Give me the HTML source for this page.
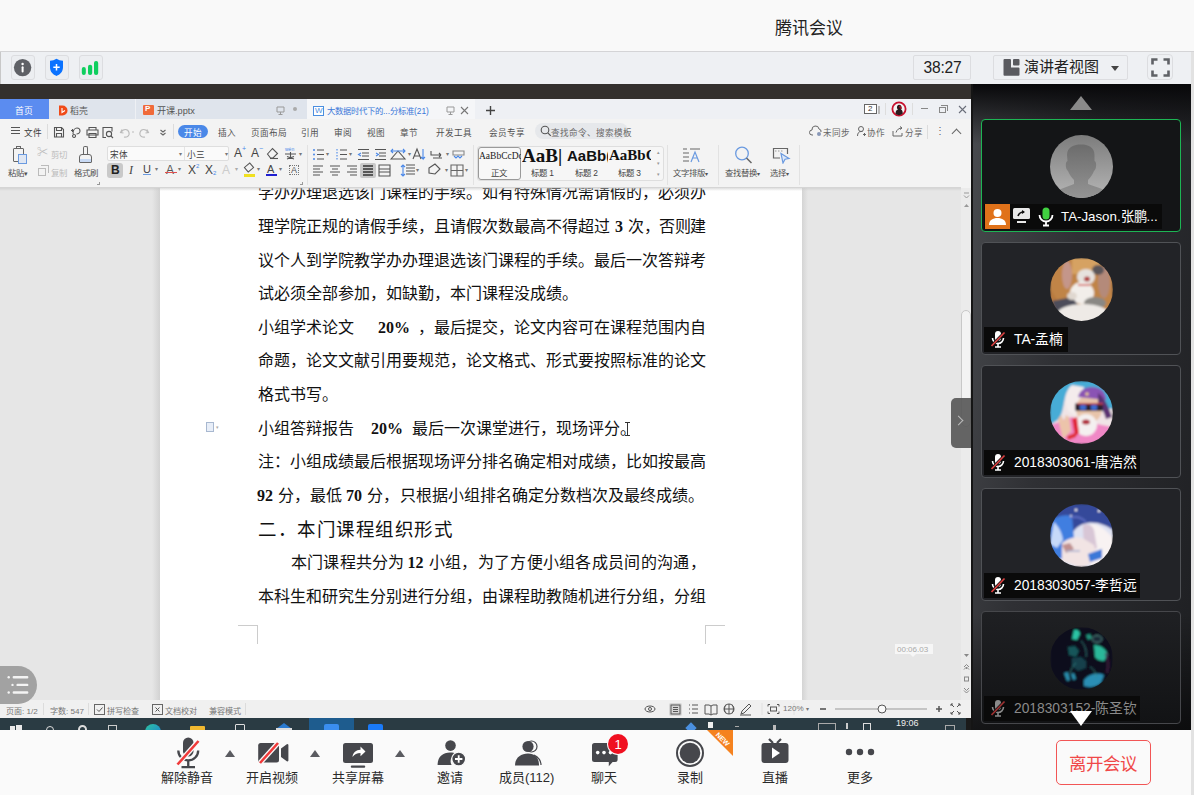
<!DOCTYPE html>
<html lang="zh-CN"><head><meta charset="utf-8">
<style>
*{margin:0;padding:0;box-sizing:border-box}
html,body{width:1194px;height:795px;overflow:hidden;background:#f9f9f9;font-family:"Liberation Sans",sans-serif;position:relative}
.a{position:absolute}
.t{white-space:nowrap}
.d{position:absolute;white-space:nowrap;font-family:"Liberation Serif",serif;font-size:16px;line-height:20px;color:#111}
</style></head><body>
<!-- header -->
<div class="a" style="left:0;top:0;width:1194px;height:51px;background:#f9f9f9"></div>
<div class="a t" style="left:775px;top:13.5px;font-size:17px;color:#222">腾讯会议</div>
<div class="a" style="left:0;top:51px;width:1194px;height:1px;background:#d4d4d6"></div>
<!-- toolbar -->
<div class="a" style="left:0;top:52px;width:1194px;height:32px;background:#eef0f3"></div>
<div class="a" style="left:0;top:52px;width:1px;height:32px;background:#c8c8c8"></div>
<!-- toolbar icons -->
<div class="a" style="left:11px;top:55px;width:24px;height:25px;border:1px solid #dcdde0;border-radius:3px;background:#eceef1"></div>
<svg class="a" style="left:13px;top:58px" width="20" height="20" viewBox="0 0 20 20"><circle cx="9.6" cy="9.6" r="8.7" fill="#5f6166"/><circle cx="9.6" cy="6" r="1.2" fill="#fff"/><rect x="8.6" y="8.2" width="2" height="6.4" rx="1" fill="#fff"/></svg>
<div class="a" style="left:45px;top:55px;width:24px;height:25px;border:1px solid #dcdde0;border-radius:3px;background:#eceef1"></div>
<svg class="a" style="left:47px;top:58px" width="20" height="19" viewBox="0 0 20 19"><path d="M9.5 .8c2 1.3 4 2 6.5 2v6.5c0 4.5-3 7.5-6.5 8.6c-3.5-1.1-6.5-4.1-6.5-8.6v-6.5c2.5 0 4.5-.7 6.5-2z" fill="#0a72ff"/><path d="M9.5 6v6.5M6.3 9.3h6.4" stroke="#fff" stroke-width="1.5"/></svg>
<div class="a" style="left:79px;top:55px;width:24px;height:25px;border:1px solid #dcdde0;border-radius:3px;background:#eceef1"></div>
<svg class="a" style="left:81px;top:60px" width="20" height="17" viewBox="0 0 20 17"><rect x=".8" y="7" width="4" height="8" rx="2" fill="#0fcf5e"/><rect x="7" y="4.8" width="4.2" height="10.2" rx="2" fill="#0fcf5e"/><rect x="13" y="1.1" width="4.2" height="13.9" rx="2" fill="#0fcf5e"/></svg>
<div class="a" style="left:913px;top:55px;width:58px;height:25px;border:1px solid #dcdde0;border-radius:2px;background:#eef0f3"></div>
<div class="a t" style="left:923.5px;top:59px;font-size:15.6px;line-height:18px;color:#222;letter-spacing:-0.2px">38:27</div>
<div class="a" style="left:993px;top:55px;width:135px;height:25px;border:1px solid #dcdde0;border-radius:2px;background:#eef0f3"></div>
<svg class="a" style="left:1002px;top:58px" width="19" height="19" viewBox="0 0 19 19"><path d="M2.5 1h5.5a1 1 0 0 1 1 1v7.5h7.5a1 1 0 0 1 1 1v6.3a1 1 0 0 1-1 1h-14a1 1 0 0 1-1-1v-14.8a1 1 0 0 1 1-1z" fill="#5a5b60"/><rect x="11" y="1" width="6.5" height="6.5" rx="1" fill="#5a5b60"/></svg>
<div class="a t" style="left:1024px;top:58px;font-size:15px;line-height:18px;color:#222">演讲者视图</div>
<div class="a" style="left:1111px;top:66px;width:0;height:0;border-left:4px solid transparent;border-right:4px solid transparent;border-top:5px solid #444"></div>
<div class="a" style="left:1147px;top:54px;width:26px;height:26px;border:1px solid #dcdde0;border-radius:4px;background:#eef0f3"></div>
<svg class="a" style="left:1151px;top:58px" width="19" height="19" viewBox="0 0 19 19"><path d="M1.5 6.5v-5h5M12.5 1.5h5v5M17.5 12.5v5h-5M6.5 17.5h-5v-5" stroke="#5f6166" stroke-width="2.6" fill="none"/></svg>
<!-- dark bar -->
<div class="a" style="left:0;top:84px;width:971px;height:15px;background:#33302d"></div>
<!-- WPS window -->
<div id="wps" class="a" style="left:0;top:99px;width:971px;height:619px;background:#e6e6e6;overflow:hidden">
 <!-- tabs row -->
 <div class="a" style="left:0;top:0;width:971px;height:20px;background:#eef0f4"></div>
 <div class="a" style="left:0;top:0;width:49px;height:20px;background:#5b8cf0"></div>
 <div class="a t" style="left:15px;top:5.5px;font-size:8.8px;line-height:12px;color:#fff">首页</div>
 <div class="a" style="left:49px;top:0;width:86px;height:20px;background:#dfe4ec"></div>
 <svg class="a" style="left:58px;top:6px" width="10" height="11" viewBox="0 0 10 11"><path d="M1 0.5h3.5a5 5 0 0 1 0 10H1z" fill="#f04a18"/><path d="M4 3v4.5l3-2" stroke="#fff" stroke-width="1.1" fill="none"/></svg>
 <div class="a t" style="left:70px;top:5.5px;font-size:8.8px;line-height:12px;color:#555">稻壳</div>
 <div class="a" style="left:136px;top:0;width:171px;height:20px;background:#dfe4ec"></div>
 <div class="a" style="left:143px;top:6px;width:11px;height:10px;background:#f06a3a;border-radius:1px"></div>
 <div class="a t" style="left:145px;top:5px;font-size:8px;line-height:9px;color:#fff;font-weight:bold">P</div>
 <div class="a t" style="left:157px;top:5.5px;font-size:9.2px;line-height:12px;color:#555">开课.pptx</div>
 <svg class="a" style="left:276px;top:7px" width="9" height="9" viewBox="0 0 9 9"><path d="M1 1h7v5h-7zM4.5 6v2M2.5 8.5h4" stroke="#999" stroke-width="1" fill="none"/></svg>
 <div class="a" style="left:293px;top:8px;width:4px;height:4px;border-radius:50%;background:#aaa"></div>
 <div class="a" style="left:307px;top:0;width:168px;height:20px;background:#f5f6f8"></div>
 <div class="a" style="left:313px;top:7px;width:11px;height:10px;border:1px solid #4a8ee0;background:#fff"></div>
 <div class="a t" style="left:315px;top:7px;font-size:8px;line-height:9px;color:#4a8ee0">W</div>
 <div class="a t" style="left:327px;top:5.5px;font-size:8.4px;line-height:12px;color:#3b78d8">大数据时代下的...分标准(21)</div>
 <svg class="a" style="left:446px;top:7px" width="9" height="9" viewBox="0 0 9 9"><path d="M1 1h7v5h-7zM4.5 6v2M2.5 8.5h4" stroke="#999" stroke-width="1" fill="none"/></svg>
 <svg class="a" style="left:460px;top:7px" width="9" height="9" viewBox="0 0 9 9"><path d="M1 1l7 7M8 1l-7 7" stroke="#777" stroke-width="1.1"/></svg>
 <svg class="a" style="left:485px;top:6px" width="11" height="11" viewBox="0 0 11 11"><path d="M5.5 1v9M1 5.5h9" stroke="#444" stroke-width="1.4"/></svg>
 <div class="a" style="left:864px;top:5px;width:13px;height:10px;border:1px solid #666;background:#fff"></div>
 <div class="a t" style="left:868px;top:5px;font-size:8px;line-height:10px;color:#333">2</div>
 <div class="a" style="left:878px;top:7px;width:2px;height:8px;background:#bbb"></div>
 <svg class="a" style="left:891px;top:2px" width="16" height="16" viewBox="0 0 16 16"><circle cx="8" cy="8" r="6.6" fill="#f4f4f4" stroke="#c8102e" stroke-width="1.8"/><path d="M4.5 13c0-3 1-4 2.5-4.5c-1.5-1-1.5-4.5 1-4.8c2.5-.2 3.2 2.8 1.8 4.6c1.2.6 2 2 2 4.2a6 6 0 0 1-7.3.5z" fill="#2a1a1e"/><path d="M8 5.5c1.5 0 2.2 1.2 2 2.5" stroke="#a01020" stroke-width="1.4" fill="none"/></svg>
 <div class="a" style="left:885px;top:4px;width:1px;height:12px;background:#ddd"></div>
 <div class="a" style="left:912px;top:4px;width:1px;height:12px;background:#ddd"></div>
 <div class="a" style="left:921px;top:9px;width:7px;height:1px;background:#888"></div>
 <div class="a" style="left:939px;top:8px;width:7px;height:6px;border:1px solid #888"></div>
 <div class="a" style="left:941px;top:6px;width:7px;height:6px;border-top:1px solid #888;border-right:1px solid #888"></div>
 <svg class="a" style="left:958px;top:6px" width="9" height="9" viewBox="0 0 9 9"><path d="M1 1l7 7M8 1l-7 7" stroke="#6a6e7a" stroke-width="1.1"/></svg>
 <!-- menu row -->
 <div class="a" style="left:0;top:20px;width:971px;height:69px;background:#f3f3f3"></div>
 <div class="a" style="left:11px;top:28px;width:9px;height:7px;border-top:1px solid #555;border-bottom:1px solid #555"></div>
 <div class="a" style="left:11px;top:31px;width:9px;height:1px;background:#555"></div>
 <div class="a t" style="left:24px;top:28.5px;font-size:8.6px;line-height:10px;color:#404040">文件</div>
 <div class="a" style="left:47px;top:25px;width:1px;height:15px;background:#dcdcdc"></div>
 <svg class="a" style="left:52px;top:26px" width="120" height="14" viewBox="0 0 120 14"><g stroke="#555" stroke-width="1.1" fill="none">
  <path d="M2.5 2.5h7l2 2v7.5h-9z"/><path d="M4.5 2.5v3h5v-3M4.5 12v-3.5h5V12"/>
  <path d="M19 5.5h3M20.5 4v3M21 9c0-4 2-6 4-6s3 1.5 3 3-1.5 3-3.5 3M22 9.5a1.5 1.5 0 1 0 .1 0"/>
  <path d="M37 4.5v-2h7v2M35 5h11v5h-11zM37 8.5h7v4h-7z"/>
  <path d="M54 12.5h-3v-10h9v4"/><circle cx="57" cy="9" r="2.6"/><path d="M59 11l2 2"/>
  <path d="M70 4.5l-1.5 3 3 .5M69 7.5c2-4 7-4 8 0s-3 5-5 4.5" stroke="#bbb"/><path d="M80 7h2" stroke="#bbb"/>
  <path d="M95 4.5l1.5 3-3 .5M96 7.5c-2-4-7-4-8 0s3 5 5 4.5" stroke="#bbb"/>
  <path d="M108.5 5l2.5 2 2.5-2M108.5 8l2.5 2 2.5-2" stroke="#666"/>
 </g></svg>
 <div class="a" style="left:173px;top:25px;width:1px;height:15px;background:#dcdcdc"></div>
 <div class="a" style="left:178px;top:26px;width:30px;height:13px;border-radius:7px;background:#4a88e8"></div>
 <div class="a t" style="left:184px;top:28.5px;font-size:8.6px;line-height:10px;color:#fff">开始</div>
 <div class="a t" style="left:218px;top:28.5px;font-size:8.6px;line-height:10px;color:#505050">插入</div>
 <div class="a t" style="left:251px;top:28.5px;font-size:8.6px;line-height:10px;color:#505050">页面布局</div>
 <div class="a t" style="left:301px;top:28.5px;font-size:8.6px;line-height:10px;color:#505050">引用</div>
 <div class="a t" style="left:334px;top:28.5px;font-size:8.6px;line-height:10px;color:#505050">审阅</div>
 <div class="a t" style="left:367px;top:28.5px;font-size:8.6px;line-height:10px;color:#505050">视图</div>
 <div class="a t" style="left:400px;top:28.5px;font-size:8.6px;line-height:10px;color:#505050">章节</div>
 <div class="a t" style="left:436px;top:28.5px;font-size:8.6px;line-height:10px;color:#505050">开发工具</div>
 <div class="a t" style="left:489px;top:28.5px;font-size:8.6px;line-height:10px;color:#505050">会员专享</div>
 <div class="a" style="left:535px;top:24px;width:93px;height:16px;border-radius:8px;background:#e6e8eb"></div>
 <svg class="a" style="left:540px;top:26px" width="12" height="12" viewBox="0 0 12 12"><circle cx="5" cy="5" r="3.8" stroke="#555" stroke-width="1.1" fill="none"/><path d="M7.8 7.8l3 3" stroke="#555" stroke-width="1.2"/></svg>
 <div class="a t" style="left:551px;top:28.5px;font-size:8.6px;line-height:10px;color:#666">查找命令、搜索模板</div>
 <svg class="a" style="left:809px;top:26px" width="100" height="12" viewBox="0 0 100 12"><g stroke="#666" stroke-width="1" fill="none"><path d="M4 10H3a2.5 2.5 0 0 1 0-5a3.5 3.5 0 0 1 7-1a2.5 2.5 0 0 1 2 3"/><circle cx="10" cy="9" r="2" fill="#8898b8" stroke="none"/>
 <circle cx="52" cy="4" r="2.5"/><path d="M48.5 11c0-3 1.5-4.5 3.5-4.5h1.5M54 9.5h3M55.5 8v3"/>
 <path d="M84 6v5h9V8M87 7.5c1-3 3-4.5 6-4.5M91 1.5l2 1.5-2 1.5"/></g></svg>
 <div class="a t" style="left:823px;top:28.5px;font-size:8.6px;line-height:10px;color:#666">未同步</div>
 <div class="a t" style="left:867px;top:28.5px;font-size:8.6px;line-height:10px;color:#666">协作</div>
 <div class="a t" style="left:905px;top:28.5px;font-size:8.6px;line-height:10px;color:#666">分享</div>
 <div class="a" style="left:927px;top:26px;width:1px;height:14px;background:#dcdcdc"></div>
 <div class="a t" style="left:934.5px;top:26px;font-size:10px;line-height:12px;color:#666">⋮</div>
 <div class="a" style="left:953px;top:31px;width:7px;height:7px;border-top:1px solid #666;border-left:1px solid #666;transform:rotate(45deg)"></div>

 <!-- ribbon (y offsets relative to wps top 99) -->
 <!-- paste -->
 <div class="a" style="left:13px;top:49px;width:11px;height:14px;border:1px solid #666;border-radius:1px;background:#f3f3f3"></div>
 <div class="a" style="left:16px;top:47px;width:5px;height:3px;border:1px solid #666;background:#f3f3f3"></div>
 <div class="a" style="left:18px;top:55px;width:9px;height:10px;border:1px solid #6a9ae0;background:#dfe6f2"></div>
 <div class="a t" style="left:8px;top:69px;font-size:8.4px;line-height:10px;color:#505050">粘贴<span style="font-size:7px">▾</span></div>
 <div class="a t" style="left:37px;top:47px;font-size:11px;line-height:12px;color:#bbb">✂</div>
 <div class="a t" style="left:51px;top:50.5px;font-size:8.4px;line-height:10px;color:#bbb">剪切</div>
 <div class="a" style="left:38px;top:69px;width:8px;height:8px;border:1px solid #bbb"></div>
 <div class="a" style="left:41px;top:66px;width:8px;height:8px;border:1px solid #bbb;border-left:0;border-bottom:0"></div>
 <div class="a t" style="left:51px;top:69px;font-size:8.4px;line-height:10px;color:#bbb">复制</div>
 <div class="a" style="left:83px;top:47px;width:5px;height:8px;border:1px solid #666;border-bottom:0;border-radius:2px 2px 0 0"></div>
 <div class="a" style="left:79px;top:55px;width:13px;height:9px;border:1px solid #666;border-radius:3px 3px 1px 1px;background:linear-gradient(#f3f3f3 50%,#c8daf5 50%)"></div>
 <div class="a t" style="left:74px;top:69px;font-size:8.4px;line-height:10px;color:#505050">格式刷</div>
 <div class="a" style="left:97px;top:83px;width:3px;height:3px;border-right:1px solid #999;border-bottom:1px solid #999"></div>
 
 <!-- font -->
 <div class="a" style="left:107px;top:47px;width:122px;height:15px;border:1px solid #dedede;border-radius:2px;background:#fafafa"></div>
 <div class="a" style="left:184px;top:48px;width:1px;height:13px;background:#e4e4e4"></div>
 <div class="a t" style="left:110px;top:51px;font-size:8.6px;line-height:10px;color:#404040">宋体</div>
 <div class="a t" style="left:179px;top:51px;font-size:6px;line-height:8px;color:#777">▾</div>
 <div class="a t" style="left:187px;top:51px;font-size:8.6px;line-height:10px;color:#404040">小三</div>
 <div class="a t" style="left:225px;top:51px;font-size:6px;line-height:8px;color:#777">▾</div>
 <div class="a t" style="left:234px;top:48px;font-size:12px;line-height:13px;color:#444">A</div><div class="a t" style="left:242px;top:46px;font-size:7px;line-height:7px;color:#4a88e8">+</div>
 <div class="a t" style="left:251px;top:48px;font-size:12px;line-height:13px;color:#444">A</div><div class="a t" style="left:259px;top:46px;font-size:7px;line-height:7px;color:#4a88e8">−</div>
 <svg class="a" style="left:266px;top:47px" width="32" height="14" viewBox="0 0 32 14"><g stroke="#555" stroke-width="1.1" fill="none"><path d="M1.5 8l5-5.5 5 5-4.5 4.5h-2.5z"/><path d="M4 12.5h8"/><path d="M19 8h11M24.5 6v7M21 10.5l7 2.5M28 10.5l-7 2.5"/></g><text x="19" y="5" font-size="5" fill="#4a88e8" font-family="Liberation Sans">wén</text></svg>
 <div class="a t" style="left:299px;top:51px;font-size:6px;line-height:8px;color:#777">▾</div>
 <div class="a" style="left:107px;top:64px;width:16px;height:15px;border-radius:3px;background:#c9c9c9"></div>
 <div class="a t" style="left:111px;top:65px;font-size:12px;line-height:13px;color:#222;font-weight:bold">B</div>
 <div class="a t" style="left:129px;top:65px;font-size:12px;line-height:13px;color:#444;font-style:italic;font-family:'Liberation Serif',serif">I</div>
 <div class="a t" style="left:143px;top:64px;font-size:11px;line-height:13px;color:#444;text-decoration:underline;text-decoration-color:#6a9ae0">U</div>
 <div class="a t" style="left:155px;top:66px;font-size:6px;line-height:8px;color:#777">▾</div>
 <div class="a t" style="left:166px;top:65px;font-size:12px;line-height:13px;color:#555">A</div>
 <div class="a" style="left:165px;top:73px;width:12px;height:1px;background:#e05050"></div>
 <div class="a t" style="left:178px;top:66px;font-size:6px;line-height:8px;color:#777">▾</div>
 <div class="a t" style="left:188px;top:65px;font-size:12px;line-height:13px;color:#444">X</div><div class="a t" style="left:196px;top:64px;font-size:6px;line-height:7px;color:#4a88e8">2</div>
 <div class="a t" style="left:205px;top:65px;font-size:12px;line-height:13px;color:#444">X</div><div class="a t" style="left:213px;top:71px;font-size:6px;line-height:7px;color:#4a88e8">2</div>
 <div class="a t" style="left:222px;top:65px;font-size:12px;line-height:13px;color:#ccc">A</div>
 <div class="a t" style="left:235px;top:66px;font-size:6px;line-height:8px;color:#aaa">▾</div>
 <div class="a" style="left:245px;top:65px;width:8px;height:7px;border:1px solid #555;transform:rotate(-40deg)"></div>
 <div class="a" style="left:244px;top:75px;width:11px;height:3px;background:#f0e020"></div>
 <div class="a t" style="left:257px;top:66px;font-size:6px;line-height:8px;color:#777">▾</div>
 <div class="a t" style="left:267px;top:64px;font-size:11px;line-height:12px;color:#444">A</div>
 <div class="a" style="left:266px;top:75px;width:11px;height:2px;background:#2020d0"></div>
 <div class="a t" style="left:279px;top:66px;font-size:6px;line-height:8px;color:#777">▾</div>
 <div class="a" style="left:289px;top:66px;width:10px;height:10px;border:1px dotted #777"></div>
 <div class="a t" style="left:291px;top:66px;font-size:9px;line-height:10px;color:#555">A</div>
 <div class="a" style="left:300px;top:83px;width:3px;height:3px;border-right:1px solid #999;border-bottom:1px solid #999"></div>
 <div class="a" style="left:307px;top:46px;width:1px;height:40px;background:#e2e2e2"></div>
 <!-- paragraph -->
 <svg class="a" style="left:310px;top:46px" width="160" height="36" viewBox="0 0 160 36">
  <g fill="#4a88e8"><circle cx="4" cy="5" r="1"/><circle cx="4" cy="9.5" r="1"/><circle cx="4" cy="14" r="1"/></g>
  <g stroke="#555" stroke-width="1.1" fill="none">
   <path d="M7 5h7M7 9.5h7M7 14h7"/>
   <path d="M30 5h7M30 9.5h7M30 14h7"/>
   <path d="M48 4.5h11M52 8h7M52 11h7M48 14.5h11"/>
   <path d="M65 4.5h11M69 8h7M69 11h7M65 14.5h11"/>
   <path d="M81 14l7-8 7 8z"/>
   <path d="M103 14l4-10 4 10M104.5 11h5"/>
   <path d="M121 6v4h10M131 10l-2-2M131 10l-2 2M123 13h9" />
   <path d="M143 6h11v4h-11z" stroke="#888"/>
   <path d="M3 21h10M3 24h7M3 27h10M3 30h7"/>
   <path d="M20 21h10M22 24h6M20 27h10M22 30h6"/>
   <path d="M37 21h10M40 24h7M37 27h10M40 30h7"/>
   <path d="M69 20h11v11h-11zM69 24h11M69 27h11"/>
   <path d="M96 20h9M96 23h9M96 26h9M96 29h9"/>
   <path d="M119 23l6-4 5 5-5 5-6-1z"/>
   <path d="M141 20h12v11h-12zM147 20v11M141 25.5h12" stroke="#666"/>
  </g>
  <g stroke="#4a88e8" stroke-width="1.1" fill="none"><path d="M27 4v11" stroke-dasharray="1.5 1.5"/><path d="M51 8l-2.5 1.5 2.5 1.5M66 8l2.5 1.5-2.5 1.5"/><path d="M83 4l-2 2 2 2M93 4l2 2-2 2M81 6h14"/><path d="M113 4v10l-2-2M113 14l2-2"/><path d="M93 20v11M91 22l2-2 2 2M91 29l2 2 2-2"/><path d="M144 11l2 2 2-2 2 2 2-2"/></g>
  <rect x="50" y="18" width="16" height="15" rx="2" fill="#c9c9c9"/>
  <g stroke="#333" stroke-width="1.3"><path d="M53 21h10M53 24h10M53 27h10M53 30h10"/></g>
  <g fill="#777" font-size="6" font-family="Liberation Sans"><text x="16" y="11">▾</text><text x="39" y="11">▾</text><text x="98" y="11">▾</text><text x="136" y="11">▾</text><text x="106" y="27">▾</text><text x="135" y="27">▾</text><text x="155" y="27">▾</text></g>
 </svg>
 <div class="a" style="left:473px;top:46px;width:1px;height:40px;background:#e2e2e2"></div>
 <!-- styles gallery -->
 <div class="a" style="left:477px;top:47px;width:187px;height:34.5px;border:1px solid #dedede;border-radius:3px;background:#f6f6f6"></div>
 <div class="a" style="left:478px;top:48px;width:43px;height:32.5px;border:1px solid #9a9a9a;border-radius:3px;background:#f8f8f8"></div>
 <div class="a t" style="left:479px;top:52px;width:42px;overflow:hidden;font-size:9.5px;line-height:11px;color:#222;font-family:'Liberation Serif',serif">AaBbCcDd</div>
 <div class="a t" style="left:491px;top:69px;font-size:8.4px;line-height:10px;color:#404040">正文</div>
 <div class="a t" style="left:522px;top:47px;width:44px;overflow:hidden;font-size:19px;line-height:20px;color:#111;font-weight:bold;font-family:'Liberation Serif',serif">AaB|</div>
 <div class="a t" style="left:531px;top:69px;font-size:8.4px;line-height:10px;color:#404040">标题 1</div>
 <div class="a t" style="left:567px;top:48px;width:41px;overflow:hidden;font-size:15px;line-height:17px;color:#111;font-weight:bold">AaBb(</div>
 <div class="a t" style="left:575px;top:69px;font-size:8.4px;line-height:10px;color:#404040">标题 2</div>
 <div class="a t" style="left:609px;top:48px;width:42px;overflow:hidden;font-size:15px;line-height:17px;color:#111;font-weight:bold;font-family:'Liberation Serif',serif">AaBbC</div>
 <div class="a t" style="left:618px;top:69px;font-size:8.4px;line-height:10px;color:#404040">标题 3</div>
 <div class="a t" style="left:657px;top:48px;font-size:5px;line-height:11px;color:#999">▴<br>▾<br>▾</div>
 <svg class="a" style="left:681px;top:48px" width="22" height="18" viewBox="0 0 22 18"><g stroke="#666" stroke-width="1.2" fill="none"><path d="M2 2h4M9 2h10M2 6h6M2 10h6M2 14h6"/></g><path d="M10 15l4-10 4 10M11.5 11h5" stroke="#6a9ae0" stroke-width="1.2" fill="none"/></svg>
 <div class="a t" style="left:673px;top:69px;font-size:8.4px;line-height:10px;color:#505050">文字排版<span style="font-size:6px">▾</span></div>
 <div class="a" style="left:667px;top:46px;width:1px;height:40px;background:#e2e2e2"></div><div class="a" style="left:718px;top:46px;width:1px;height:40px;background:#e2e2e2"></div>
 <svg class="a" style="left:734px;top:47px" width="20" height="18" viewBox="0 0 20 18"><circle cx="8" cy="7.5" r="6.3" stroke="#6a9ae0" stroke-width="1.3" fill="none"/><path d="M12.5 12l5 5" stroke="#666" stroke-width="1.5"/></svg>
 <div class="a t" style="left:725px;top:69px;font-size:8.4px;line-height:10px;color:#505050">查找替换<span style="font-size:6px">▾</span></div>
 <svg class="a" style="left:772px;top:48px" width="19" height="17" viewBox="0 0 19 17"><path d="M8 11H1.5V1.5h14V7" stroke="#666" stroke-width="1.2" fill="none"/><path d="M3 4h1.5M6 4h1.5M9 4h1.5" stroke="#999" stroke-width="1"/><path d="M9 6.5l8 5-4 .7-2 3.8z" stroke="#6a9ae0" stroke-width="1.2" fill="#dde8f8"/></svg>
 <div class="a t" style="left:770px;top:69px;font-size:8.4px;line-height:10px;color:#505050">选择<span style="font-size:6px">▾</span></div>
 <div class="a" style="left:799px;top:46px;width:1px;height:40px;background:#e2e2e2"></div>

 <!-- document area -->
 <div class="a" style="left:0;top:89px;width:961px;height:512px;background:#e6e6e6"></div>
 <div class="a" style="left:152px;top:89px;width:8px;height:512px;background:linear-gradient(90deg,#e6e6e6,#d2d2d2)"></div>
 <div class="a" style="left:802px;top:89px;width:6px;height:512px;background:linear-gradient(90deg,#d4d4d4,#e6e6e6)"></div>
 <div id="page" class="a" style="left:160px;top:89px;width:642px;height:512px;background:#fff;overflow:hidden">
<div class="d" style="left:98px;top:-4.7px;">学办办理退选该门课程的手续。如有特殊情况需请假的，必须办</div>
<div class="d" style="left:98px;top:28.9px;">理学院正规的请假手续，且请假次数最高不得超过</div>
<div class="d" style="left:455px;top:28.9px;font-weight:bold;">3</div>
<div class="d" style="left:468px;top:28.9px;letter-spacing:-0.4px">次，否则建</div>
<div class="d" style="left:98px;top:62.5px;">议个人到学院教学办办理退选该门课程的手续。最后一次答辩考</div>
<div class="d" style="left:98px;top:96.1px;">试必须全部参加，如缺勤，本门课程没成绩。</div>
<div class="d" style="left:98px;top:129.7px;">小组学术论文</div>
<div class="d" style="left:218px;top:129.7px;font-weight:bold;">20%</div>
<div class="d" style="left:258px;top:129.7px;">，最后提交，论文内容可在课程范围内自</div>
<div class="d" style="left:98px;top:163.3px;">命题，论文文献引用要规范，论文格式、形式要按照标准的论文</div>
<div class="d" style="left:98px;top:196.9px;">格式书写。</div>
<div class="d" style="left:98px;top:230.5px;">小组答辩报告</div>
<div class="d" style="left:211px;top:230.5px;font-weight:bold;">20%</div>
<div class="d" style="left:252px;top:230.5px;">最后一次课堂进行，现场评分。</div>
<div class="d" style="left:98px;top:264.1px;">注：小组成绩最后根据现场评分排名确定相对成绩，比如按最高</div>
<div class="d" style="left:97px;top:297.7px;font-weight:bold;">92</div>
<div class="d" style="left:118px;top:297.7px;">分，最低</div>
<div class="d" style="left:186px;top:297.7px;font-weight:bold;">70</div>
<div class="d" style="left:207px;top:297.7px;">分，</div>
<div class="d" style="left:240px;top:297.7px;">只根据小组排名确定分数档次及最终成绩。</div>
<div class="d" style="left:131.3px;top:364.9px;letter-spacing:0.1px">本门课程共分为</div>
<div class="d" style="left:247.6px;top:364.9px;font-weight:bold;">12</div>
<div class="d" style="left:268.8px;top:364.9px;letter-spacing:0.3px">小组，为了方便小组各成员间的沟通，</div>
<div class="d" style="left:98px;top:398.5px;">本科生和研究生分别进行分组，由课程助教随机进行分组，分组</div>
<div class="d" style="left:98px;top:330px;font-size:18.5px;line-height:24px;letter-spacing:0.55px">二．本门课程组织形式</div>
<div class="a" style="left:467px;top:234px;width:1px;height:13px;background:#333"></div><div class="a" style="left:465px;top:234px;width:5px;height:1px;background:#333"></div><div class="a" style="left:465px;top:247px;width:5px;height:1px;background:#333"></div>
<div class="a" style="left:46px;top:234px;width:8px;height:10px;border:1px solid #a8b8d0;background:#e8eef8"></div><div class="a t" style="left:56px;top:236px;font-size:5px;color:#aaa">▾</div>
<div class="a" style="left:78px;top:437px;width:20px;height:19px;border-top:1px solid #ccc;border-right:1px solid #ccc"></div>
<div class="a" style="left:545px;top:437px;width:20px;height:19px;border-top:1px solid #ccc;border-left:1px solid #ccc"></div>
</div>
 <div class="a" style="left:961px;top:89px;width:10px;height:512px;background:#ebebeb"></div>
 <svg class="a" style="left:962px;top:92px" width="9" height="20" viewBox="0 0 9 20"><path d="M2 2h5M2 4.5l2.5 2.5 2.5-2.5" stroke="#999" fill="none"/><path d="M2 16h5l-2.5-3z" fill="#999"/></svg>
 <div class="a" style="left:961px;top:211px;width:10px;height:117px;border:1px solid #c8c8c8;border-radius:5px;background:#f3f3f3"></div>
 <svg class="a" style="left:962px;top:552px" width="9" height="45" viewBox="0 0 9 45"><path d="M2 3h5l-2.5 3z" fill="#888"/><path d="M2 16l2.5-2.5 2.5 2.5M2 18.5l2.5-2.5 2.5 2.5M4.5 16v2" stroke="#888" fill="none"/><rect x="2.5" y="26" width="4" height="4" stroke="#888" fill="none"/><path d="M2 37l2.5 2.5 2.5-2.5M2 39.5l2.5 2.5 2.5-2.5" stroke="#888" fill="none"/></svg>
 <div class="a" style="left:895px;top:545px;width:38px;height:10px;background:rgba(250,250,250,.8)"></div><div class="a" style="left:910px;top:555px;width:0;height:0;border-left:3px solid transparent;border-right:3px solid transparent;border-top:3px solid rgba(250,250,250,.8)"></div>
 <div class="a t" style="left:897px;top:546px;font-size:8px;line-height:10px;color:#aaa">00:06.03</div>
 <div class="a" style="left:951px;top:299px;width:20px;height:50px;border-radius:5px 0 0 5px;background:rgba(85,85,85,.9)"></div>
 <div class="a" style="left:955px;top:318px;width:7px;height:7px;border-top:1.5px solid #bbb;border-right:1.5px solid #bbb;transform:rotate(45deg)"></div>

 <div class="a" style="left:0;top:88px;width:961px;height:4px;background:linear-gradient(rgba(200,200,200,.8),rgba(230,230,230,0))"></div>
 <!-- status bar -->
 <div class="a" style="left:0;top:601px;width:971px;height:18px;background:#f0f0f0"></div>
 <div class="a t" style="left:6px;top:607.5px;font-size:8.1px;line-height:10px;color:#777">页面: 1/2</div>
 <div class="a" style="left:43px;top:604px;width:1px;height:12px;background:#dcdcdc"></div>
 <div class="a t" style="left:50px;top:607.5px;font-size:8.1px;line-height:10px;color:#777">字数: 547</div>
 <div class="a" style="left:88px;top:604px;width:1px;height:12px;background:#dcdcdc"></div>
 <svg class="a" style="left:94px;top:605px" width="11" height="11" viewBox="0 0 11 11"><rect x=".5" y=".5" width="10" height="10" fill="none" stroke="#666"/><path d="M3 5.5l2 2 3.5-4" stroke="#555" fill="none"/></svg>
 <div class="a t" style="left:107px;top:607.5px;font-size:8.1px;line-height:10px;color:#777">拼写检查</div>
 <svg class="a" style="left:152px;top:605px" width="11" height="11" viewBox="0 0 11 11"><rect x=".5" y=".5" width="10" height="10" fill="none" stroke="#666"/><path d="M3.5 3.5l4 4M7.5 3.5l-4 4" stroke="#555"/></svg>
 <div class="a t" style="left:165px;top:607.5px;font-size:8.1px;line-height:10px;color:#777">文档校对</div>
 <div class="a t" style="left:209px;top:607.5px;font-size:8.1px;line-height:10px;color:#777">兼容模式</div>
 <div class="a" style="left:245px;top:604px;width:1px;height:12px;background:#dcdcdc"></div>
 <svg class="a" style="left:640px;top:603px" width="325" height="14" viewBox="0 0 325 14">
  <g stroke="#555" stroke-width="1" fill="none">
   <ellipse cx="10" cy="7" rx="5" ry="3"/><circle cx="10" cy="7" r="1.5"/>
   <rect x="29" y="1" width="13" height="13" rx="2" fill="#d6d6d6" stroke="none"/>
   <rect x="31" y="3" width="9" height="9"/><path d="M33 5.5h5M33 7.5h5M33 9.5h5"/>
   <path d="M49 3h1M52 3h6M49 7h1M52 7h6M49 11h1M52 11h6"/>
   <path d="M65 3h4l2 1 2-1h4v9h-4l-2 1-2-1h-4zM71 4v9"/>
   <circle cx="89" cy="7" r="5"/><path d="M84 7h10M89 2v10M86 2.5c-2 3-2 6 0 9M92 2.5c2 3 2 6 0 9"/>
   <path d="M101 12l1-3 7-7 2 2-7 7zM100 13h11"/>
   <path d="M128 2.5h2M128 2.5v2M139 2.5h-2M139 2.5v2M128 11.5h2M128 11.5v-2M139 11.5h-2M139 11.5v-2"/><rect x="130.5" y="5" width="6" height="4"/>
   <path d="M180 7h6" stroke-width="1.6"/>
   <path d="M195 7h92" stroke="#999"/>
   <circle cx="242" cy="7" r="4" fill="#fafafa"/>
   <path d="M296 7h6M299 4v6" stroke-width="1.5"/>
   <path d="M311 2l3 3M311 2h2M311 2v2M320 2l-3 3M320 2h-2M320 2v2M311 12l3-3M311 12h2M311 12v-2M320 12l-3-3M320 12h-2M320 12v-2"/>
  </g>
  <path d="M122 1v12M154 1v12" stroke="#e0e0e0"/>
 </svg>
 <div class="a t" style="left:783px;top:605px;font-size:8.1px;line-height:10px;color:#777">120% <span style="font-size:6px">▾</span></div>
 <div class="a" style="left:0;top:567px;width:37px;height:37.5px;border-radius:0 19px 19px 0;background:#a2a2a2;z-index:2"></div>
 <svg class="a" style="left:6px;top:576px;z-index:3" width="23" height="20" viewBox="0 0 23 20"><g fill="#f4f4f4"><circle cx="2.7" cy="2.3" r="1.2"/><circle cx="6.5" cy="9.9" r="1.2"/><circle cx="2.7" cy="17.5" r="1.2"/></g><g stroke="#f4f4f4" stroke-width="2.4" stroke-linecap="round"><path d="M7.8 2.3h13.4M11.6 9.9h9.6M7.8 17.5h13.4"/></g></svg>

</div>
<!-- taskbar -->
<div class="a" style="left:0;top:718px;width:971px;height:12px;background:#2a3b43;overflow:hidden">
 <div class="a" style="left:10px;top:8px;width:5px;height:5px;background:#e8e8e8"></div><div class="a" style="left:16px;top:7px;width:6px;height:6px;background:#e8e8e8"></div>
 <div class="a" style="left:46px;top:8px;width:8px;height:8px;border:1.5px solid #ddd;border-radius:50%"></div>
 <div class="a" style="left:78px;top:7px;width:9px;height:9px;border:2px solid #ddd;border-radius:50%"></div>
 <div class="a" style="left:108px;top:7px;width:9px;height:8px;border:1px solid #ccc"></div>
 <div class="a" style="left:145px;top:6px;width:16px;height:16px;border-radius:50%;background:linear-gradient(135deg,#2ec4a0,#1a7ad8)"></div>
 <div class="a" style="left:190px;top:8px;width:15px;height:10px;background:#f0b830;border-radius:1px"></div>
 <div class="a" style="left:235px;top:6px;width:10px;height:8px;border:1.5px solid #ddd;border-radius:1px"></div>
 <div class="a" style="left:276px;top:5px;width:0;height:0;border-left:8px solid transparent;border-right:8px solid transparent;border-bottom:6px solid #2a7ad0"></div><div class="a" style="left:276px;top:10px;width:16px;height:4px;background:#ddd"></div>
 <div class="a" style="left:309px;top:0;width:45px;height:12px;background:#1e5c8e"></div>
 <div class="a" style="left:324px;top:6px;width:15px;height:10px;border-radius:2px;background:#3a8ef0"></div>
 <div class="a" style="left:368px;top:6px;width:15px;height:10px;border-radius:2px;background:#1a7af8"></div>
 <div class="a" style="left:687px;top:6px;width:8px;height:8px;background:#4a90e0;transform:rotate(45deg)"></div>
 <div class="a" style="left:708px;top:4px;width:5px;height:6px;background:#eee"></div>
 <div class="a" style="left:735px;top:8px;width:4px;height:1px;background:#aaa"></div>
 <div class="a" style="left:773px;top:7px;width:3px;height:5px;background:#bbb"></div>
 <div class="a" style="left:818px;top:5px;width:18px;height:8px;border:1px solid #aaa"></div>
 <div class="a" style="left:846px;top:5px;width:2px;height:6px;background:#ccc"></div>
 <div class="a" style="left:863px;top:5px;width:8px;height:8px;border:1.5px solid #ddd"></div>
 <div class="a t" style="left:896px;top:0px;font-size:9px;line-height:10px;color:#eee">19:06</div>
 <div class="a" style="left:945px;top:7px;width:10px;height:8px;border:1px solid #aaa"></div>
 <div class="a" style="left:966px;top:0;width:5px;height:12px;background:#1a1a1a"></div>
</div>
<!-- right panel -->
<div id="rp" class="a" style="left:971px;top:84px;width:220px;height:646px;background:linear-gradient(180deg,rgba(0,0,0,0) 82%,rgba(0,0,0,.6) 100%),linear-gradient(100deg,#4a4c50 0%,#2f3034 40%,#1e1f22 100%);overflow:hidden">
 <div class="a" style="left:0;top:0;width:220px;height:60px;background:linear-gradient(#08080a,rgba(8,8,10,0))"></div>
 <div class="a" style="left:0;top:0;width:2px;height:646px;background:#151515"></div>
 <div class="a" style="left:99px;top:12px;width:0;height:0;border-left:11.5px solid transparent;border-right:11.5px solid transparent;border-bottom:14px solid #8a8a8a"></div>
 <div class="a" style="left:10px;top:35px;width:200px;height:113px;border:1.5px solid #1db554;border-radius:4px;background:#141517"></div>
 <svg class="a" style="left:79px;top:51px" width="63" height="63" viewBox="0 0 63 63"><defs><linearGradient id="g1" x1="0" y1="0" x2="0" y2="1"><stop offset="0" stop-color="#7c7c7c"/><stop offset="1" stop-color="#b6b6b6"/></linearGradient><linearGradient id="g2" x1="0" y1="0" x2="0" y2="1"><stop offset="0" stop-color="#6c6c6c"/><stop offset="1" stop-color="#949494"/></linearGradient><clipPath id="kc1"><circle cx="31.5" cy="31.5" r="31.5"/></clipPath></defs><g clip-path="url(#kc1)"><rect width="63" height="63" fill="url(#g1)"/><path d="M17 20C17 12 24 9.5 31 9.5S44.5 12 44.5 20L44.5 26C46.8 26.5 46.8 34 44 36C42.5 40 40 43 38 45L38 49C42 51 48 52 52 54L52 63L11 63L11 54C15 52 20 51 24 49L24 45C22 43 19.5 40 18 36C15.2 34 15.2 26.5 17.5 26Z" fill="url(#g2)"/></g></svg>
 <div class="a" style="left:13px;top:120px;width:178px;height:25px;background:#0a0a0a"></div>
 <div class="a" style="left:14px;top:120px;width:25px;height:25px;background:#e0721a"></div>
 <svg class="a" style="left:14px;top:120px" width="25" height="25" viewBox="0 0 25 25"><circle cx="12.5" cy="9" r="4" fill="#fff"/><path d="M4 21c0-5 4-7 8.5-7s8.5 2 8.5 7z" fill="#fff"/></svg>
 <svg class="a" style="left:41px;top:123px" width="19" height="19" viewBox="0 0 19 19"><rect x="1" y="1" width="17" height="11" rx="1.5" fill="#e8e8e8"/><path d="M6 9c1-3 3-4 6-4" stroke="#111" stroke-width="1.6" fill="none"/><path d="M10 3l3 2-3 2z" fill="#111"/><rect x="5" y="14" width="9" height="2" fill="#e8e8e8"/></svg>
 <svg class="a" style="left:65px;top:122px" width="20" height="21" viewBox="0 0 20 21"><rect x="6.5" y="1.5" width="7" height="12" rx="3.5" fill="#40d040"/><path d="M3.5 9a6.5 6.5 0 0 0 13 0" stroke="#fff" stroke-width="1.8" fill="none"/><path d="M10 15.5v3.5M7 19.5h6" stroke="#fff" stroke-width="1.8"/></svg>
 <div class="a t" style="left:90px;top:124px;font-size:13.3px;line-height:17px;color:#fff">TA-Jason.张鹏...</div>
 <div class="a" style="left:10px;top:158px;width:200px;height:113px;border:1px solid #505256;border-radius:4px;background:#222327"></div>
 <svg class="a" style="left:79px;top:174px" width="63" height="63" viewBox="0 0 63 63"><defs><clipPath id="kc2"><circle cx="31.5" cy="31.5" r="31.5"/></clipPath><filter id="fc2" x="-10%" y="-10%" width="120%" height="120%"><feGaussianBlur stdDeviation="0.8"/></filter></defs><g clip-path="url(#kc2)"><g filter="url(#fc2)"><rect width="63" height="63" fill="#c08446"/><rect x="22" y="0" width="28" height="16" fill="#d6a262"/><path d="M0 30L0 63L20 63L6 40z" fill="#b87a40"/>
<ellipse cx="17" cy="17" rx="5" ry="14" fill="#c4968a"/><ellipse cx="54" cy="24" rx="6" ry="16" fill="#b48a7a"/><ellipse cx="48" cy="12" rx="6" ry="5" fill="#5a5458"/>
<ellipse cx="36" cy="19" rx="9" ry="8" fill="#e6e2de"/><ellipse cx="37" cy="21" rx="3" ry="2.5" fill="#b04040"/><ellipse cx="32" cy="35" rx="12" ry="11" fill="#f2eeea"/><path d="M28 27h12" stroke="#c83030" stroke-width="1.2"/>
<path d="M2 43l20-4 6 8-22 8z" fill="#4e4e5a"/><ellipse cx="45" cy="45" rx="11" ry="6" fill="#8a8884"/><ellipse cx="33" cy="56" rx="26" ry="10" fill="#eeeae6"/><ellipse cx="22" cy="38" rx="5" ry="4" fill="#e0d8d0"/></g></g></svg>
 <div class="a" style="left:13px;top:243px;width:84px;height:25px;background:#0a0a0a"></div>
 <svg class="a" style="left:17px;top:245px" width="20" height="20" viewBox="0 0 20 20"><rect x="7" y="2" width="6" height="10" rx="3" fill="#fff"/><path d="M4.5 9a5.5 5.5 0 0 0 11 0" stroke="#fff" stroke-width="1.6" fill="none"/><path d="M10 14.5v3M7 18h6" stroke="#fff" stroke-width="1.6"/><path d="M3.5 17L16.5 3.5" stroke="#111" stroke-width="3.2"/><path d="M3.5 17L16.5 3.5" stroke="#e04040" stroke-width="1.6"/></svg>
 <div class="a t" style="left:43px;top:247px;font-size:13.8px;line-height:17px;color:#fff">TA-孟楠</div>
 <div class="a" style="left:10px;top:281px;width:200px;height:113px;border:1px solid #505256;border-radius:4px;background:#222327"></div>
 <svg class="a" style="left:79px;top:297px" width="63" height="63" viewBox="0 0 63 63"><defs><clipPath id="kc3"><circle cx="31.5" cy="31.5" r="31.5"/></clipPath><filter id="fc3" x="-10%" y="-10%" width="120%" height="120%"><feGaussianBlur stdDeviation="0.8"/></filter></defs><g clip-path="url(#kc3)"><g filter="url(#fc3)"><rect width="63" height="63" fill="#f0e4e6"/><path d="M0 0h63v28c-6-2-10 4-14 2c-6-12-12-26-30-22c-6 6-4 20-10 30l-9 6z" fill="#46acd6"/><path d="M22 4c-6 4-8 16-4 26l10 6l6-30z" fill="#f4ecec"/>
<ellipse cx="39" cy="28" rx="13" ry="14" fill="#e8c4aa"/><path d="M28 16c2-8 10-12 20-9c6 2 8 8 8 12z" fill="#8a52b4"/><path d="M48 12c6 4 10 12 14 24l-6 2c-2-6-4-12-8-16z" fill="#5a3272"/><circle cx="37" cy="13" r="1.8" fill="#e8c890"/>
<rect x="25" y="22" width="28" height="8" rx="2" fill="#2a2230"/><rect x="27" y="22" width="26" height="1.5" fill="#d04050"/><rect x="30" y="24" width="6" height="5" rx="1" fill="#3a6ad0"/><rect x="41" y="24" width="6" height="5" rx="1" fill="#3a6ad0"/>
<path d="M0 63V44c8-2 14-6 22-8l12 4 18 4 11 2v17z" fill="#f088c6"/><ellipse cx="36" cy="44" rx="11" ry="11" fill="#f4f0f0"/><ellipse cx="36" cy="41" rx="4" ry="2.5" fill="#b02838"/>
<path d="M8 38l3-4 3 6 2-6 3 2 2 14-8 8z" fill="#ecc4aa"/><path d="M17 55l8-3 1 4-8 3z" fill="#e03030"/><path d="M22 38l5-2 2 16-4 4z" fill="#e02838"/></g></g></svg>
 <div class="a" style="left:13px;top:366px;width:156px;height:25px;background:#0a0a0a"></div>
 <svg class="a" style="left:17px;top:368px" width="20" height="20" viewBox="0 0 20 20"><rect x="7" y="2" width="6" height="10" rx="3" fill="#fff"/><path d="M4.5 9a5.5 5.5 0 0 0 11 0" stroke="#fff" stroke-width="1.6" fill="none"/><path d="M10 14.5v3M7 18h6" stroke="#fff" stroke-width="1.6"/><path d="M3.5 17L16.5 3.5" stroke="#111" stroke-width="3.2"/><path d="M3.5 17L16.5 3.5" stroke="#e04040" stroke-width="1.6"/></svg>
 <div class="a t" style="left:43px;top:370px;font-size:13.8px;line-height:17px;color:#fff">2018303061-唐浩然</div>
 <div class="a" style="left:10px;top:404px;width:200px;height:113px;border:1px solid #505256;border-radius:4px;background:#222327"></div>
 <svg class="a" style="left:79px;top:420px" width="63" height="63" viewBox="0 0 63 63"><defs><clipPath id="kc4"><circle cx="31.5" cy="31.5" r="31.5"/></clipPath><filter id="fc4" x="-10%" y="-10%" width="120%" height="120%"><feGaussianBlur stdDeviation="0.8"/></filter></defs><g clip-path="url(#kc4)"><g filter="url(#fc4)"><rect width="63" height="63" fill="#dfe2f2"/><path d="M0 0h63v26c-8-6-20-10-30-6c-6 2-10 8-14 12l-19 4z" fill="#34489a"/><path d="M0 18c6-6 14-8 22-6l2 22-8 20-16 2z" fill="#3f7ee0"/>
<path d="M4 18c4 4 8 10 9 18l-6 8-7-4z" fill="#e8f0ff" opacity=".8"/><path d="M40 20c10 0 18 8 23 14v29h-22z" fill="#f8f2f2"/><path d="M33 21c5-2 9 0 11 5l3 18-9 6c-4-8-5-16-5-29z" fill="#d8c6d6"/>
<path d="M12 39c6-5 14-8 22-4l10 6 3 11c-4 7-10 11-18 11l-17-6z" fill="#f2e4e4"/><path d="M12 41l8-2 4 6-8 4z" fill="#c09090"/><path d="M16 47h14" stroke="#a8b0d0" stroke-width="1.5"/><path d="M38 50l14-5v9l-12 4z" fill="#3a78d8"/>
<circle cx="26" cy="6" r="1.2" fill="#fff"/><circle cx="21" cy="12" r="1" fill="#fff"/><circle cx="49" cy="7" r="1.2" fill="#fff"/><path d="M20 14c6-2 12 0 16 4" stroke="#5a6ac0" stroke-width="2" fill="none"/></g></g></svg>
 <div class="a" style="left:13px;top:489px;width:156px;height:25px;background:#0a0a0a"></div>
 <svg class="a" style="left:17px;top:491px" width="20" height="20" viewBox="0 0 20 20"><rect x="7" y="2" width="6" height="10" rx="3" fill="#fff"/><path d="M4.5 9a5.5 5.5 0 0 0 11 0" stroke="#fff" stroke-width="1.6" fill="none"/><path d="M10 14.5v3M7 18h6" stroke="#fff" stroke-width="1.6"/><path d="M3.5 17L16.5 3.5" stroke="#111" stroke-width="3.2"/><path d="M3.5 17L16.5 3.5" stroke="#e04040" stroke-width="1.6"/></svg>
 <div class="a t" style="left:43px;top:493px;font-size:13.8px;line-height:17px;color:#fff">2018303057-李哲远</div>
 <div class="a" style="left:10px;top:527px;width:200px;height:113px;border:1px solid #46474b;border-radius:4px;background:linear-gradient(#1f2023,#121315)"></div>
 <svg class="a" style="left:79px;top:543px" width="63" height="63" viewBox="0 0 63 63"><defs><clipPath id="kc5"><circle cx="31.5" cy="31.5" r="31.5"/></clipPath><filter id="fc5" x="-10%" y="-10%" width="120%" height="120%"><feGaussianBlur stdDeviation="0.8"/></filter></defs><g clip-path="url(#kc5)"><g filter="url(#fc5)"><rect width="63" height="63" fill="#0c0e1a"/><path d="M24 3c3-1 6 1 6 4l-3 6-5-1z" fill="#2cc4a4"/><path d="M36 8l4-1 2 4-4 2z" fill="#26b898" opacity=".8"/>
<path d="M44 18c7 0 12 4 14 10l-4 6c-3 0-7-1-9-4z" fill="#2ab89a"/><path d="M18 20l7-1 4 5-3 6-7-2z" fill="#155e62" opacity=".9"/><path d="M22 31l9-1 5 4v7l-8 3-6-5z" fill="#12404c"/>
<path d="M14 46l4-1 2 8-3 1z" fill="#2a90b0"/><path d="M21 47l3-1 2 6-3 1z" fill="#2a90b0"/><path d="M34 53c5-6 13-8 20-5l-3 8c-5 4-11 5-17 3z" fill="#2a8eb4"/>
<ellipse cx="47" cy="12" rx="5" ry="3.5" fill="#1a2a38" stroke="#7ccab8" stroke-width=".6"/><path d="M31 14c4 4 6 10 5 16M26 36c-4 4-6 8-6 12M40 40c4 2 6 6 6 10" stroke="#3a8a88" stroke-width=".8" fill="none"/><path d="M56 26c2 6 3 13 1 20" stroke="#4a2048" stroke-width="3" fill="none" opacity=".6"/></g></g></svg>
 <div class="a" style="left:13px;top:612px;width:156px;height:25px;background:#0a0a0a"></div>
 <svg class="a" style="left:17px;top:614px" width="20" height="20" viewBox="0 0 20 20"><rect x="7" y="2" width="6" height="10" rx="3" fill="#8a8a8a"/><path d="M4.5 9a5.5 5.5 0 0 0 11 0" stroke="#8a8a8a" stroke-width="1.6" fill="none"/><path d="M10 14.5v3M7 18h6" stroke="#8a8a8a" stroke-width="1.6"/><path d="M3.5 17L16.5 3.5" stroke="#111" stroke-width="3.2"/><path d="M3.5 17L16.5 3.5" stroke="#a03030" stroke-width="1.6"/></svg>
 <div class="a t" style="left:43px;top:616px;font-size:13.8px;line-height:17px;color:#8a8a8a">2018303152-陈圣钦</div>
 <div class="a" style="left:99px;top:627px;width:0;height:0;border-left:11.5px solid transparent;border-right:11.5px solid transparent;border-top:15px solid #fff"></div>
</div>
<div class="a" style="left:1191px;top:52px;width:3px;height:743px;background:#e2e2e2"></div>
<!-- bottom bar -->
<div id="bb" class="a" style="left:0;top:730px;width:1191px;height:65px;background:#fafafa">
 <!-- mic muted -->
 <svg class="a" style="left:174px;top:6px" width="28" height="34" viewBox="0 0 28 34"><rect x="9" y="1.5" width="10.5" height="19" rx="5.25" fill="#46474c"/><path d="M4.3 14.5a9.95 9.95 0 0 0 19.9 0" stroke="#46474c" stroke-width="2.3" fill="none"/><path d="M14.25 24.5v6M7.5 31.2h13.5" stroke="#46474c" stroke-width="2.3"/><path d="M3.5 28.5L24.5 5" stroke="#fafafa" stroke-width="5"/><path d="M3.5 28.5L24.5 5" stroke="#f03a3a" stroke-width="2.6"/></svg>
 <div class="a t" style="left:161px;top:40px;font-size:13px;line-height:16px;color:#2a2a2a">解除静音</div>
 <div class="a" style="left:225px;top:20px;width:0;height:0;border-left:5.5px solid transparent;border-right:5.5px solid transparent;border-bottom:7.5px solid #5a5b60"></div>
 <!-- video muted -->
 <svg class="a" style="left:256px;top:11px" width="34" height="24" viewBox="0 0 34 24"><rect x="2.2" y="2" width="20.8" height="19.5" rx="2.5" fill="#46474c"/><path d="M25 7.5l5.8-4.2a1 1 0 0 1 1.6.8v15.3a1 1 0 0 1-1.6.8l-5.8-4.2z" fill="#46474c"/><path d="M4 22L22 2" stroke="#fafafa" stroke-width="5"/><path d="M4 22L22 2" stroke="#f03a3a" stroke-width="2.6"/></svg>
 <div class="a t" style="left:246px;top:40px;font-size:13px;line-height:16px;color:#2a2a2a">开启视频</div>
 <div class="a" style="left:310px;top:20px;width:0;height:0;border-left:5.5px solid transparent;border-right:5.5px solid transparent;border-bottom:7.5px solid #5a5b60"></div>
 <!-- share -->
 <svg class="a" style="left:342px;top:12px" width="32" height="27" viewBox="0 0 32 27"><rect x="1" y="1" width="30" height="20" rx="2.5" fill="#46474c"/><rect x="8.8" y="23.5" width="14.4" height="2.2" rx="1" fill="#46474c"/><path d="M10.5 15c.5-4.5 3.5-7 8-7.2v-3.3l5 5-5 4.8v-3.2c-3.5 0-6 1.3-8 3.9z" fill="#fff"/></svg>
 <div class="a t" style="left:332px;top:40px;font-size:13px;line-height:16px;color:#2a2a2a">共享屏幕</div>
 <div class="a" style="left:395px;top:20px;width:0;height:0;border-left:5.5px solid transparent;border-right:5.5px solid transparent;border-bottom:7.5px solid #5a5b60"></div>
 <!-- invite -->
 <svg class="a" style="left:436px;top:10px" width="30" height="27" viewBox="0 0 30 27"><circle cx="14.5" cy="5.6" r="5.3" fill="#46474c"/><path d="M1.6 25c0-8 5-12.5 12.5-12.5c2.5 0 4.5.5 6 1.3a7.8 7.8 0 0 0-4.5 11.2z" fill="#46474c"/><circle cx="22.7" cy="19" r="6.9" fill="#46474c" stroke="#fafafa" stroke-width="1.2"/><path d="M22.7 15.3v7.4M19 19h7.4" stroke="#fff" stroke-width="1.8"/></svg>
 <div class="a t" style="left:437px;top:40px;font-size:13px;line-height:16px;color:#2a2a2a">邀请</div>
 <!-- members -->
 <svg class="a" style="left:514px;top:10px" width="30" height="27" viewBox="0 0 30 27"><circle cx="17.5" cy="6.5" r="5.5" fill="none" stroke="#46474c" stroke-width="1.2"/><path d="M20 15c4 2 7 5 7 10" stroke="#46474c" stroke-width="1.2" fill="none"/><circle cx="14" cy="6.5" r="5.6" fill="#46474c"/><path d="M1 25.5c0-8 6-12 13-12s11 4 11 12z" fill="#46474c"/></svg>
 <div class="a t" style="left:499px;top:40px;font-size:13px;line-height:16px;color:#2a2a2a">成员(112)</div>
 <!-- chat -->
 <svg class="a" style="left:590px;top:12px" width="30" height="26" viewBox="0 0 30 26"><path d="M4.5 1h20.6a2.5 2.5 0 0 1 2.5 2.5v14a2.5 2.5 0 0 1-2.5 2.5h-2.5l-3.8 4.3v-4.3h-14.3a2.5 2.5 0 0 1-2.5-2.5v-14a2.5 2.5 0 0 1 2.5-2.5z" fill="#46474c"/><circle cx="7.7" cy="10.6" r="1.8" fill="#fff"/><circle cx="14" cy="10.6" r="1.8" fill="#fff"/><circle cx="20.5" cy="10.6" r="1.8" fill="#fff"/></svg>
 <div class="a" style="left:608.4px;top:4.3px;width:20px;height:20px;border-radius:50%;background:#f01020;box-shadow:0 0 0 1px #fafafa"></div>
 <div class="a t" style="left:614.5px;top:6.5px;font-size:13px;line-height:16px;color:#fff">1</div>
 <div class="a t" style="left:591px;top:40px;font-size:13px;line-height:16px;color:#2a2a2a">聊天</div>
 <!-- record -->
 <svg class="a" style="left:675px;top:8px" width="30" height="30" viewBox="0 0 30 30"><circle cx="15" cy="15" r="13" fill="none" stroke="#46474c" stroke-width="2"/><circle cx="15" cy="15" r="10.3" fill="#46474c"/></svg>
 <div class="a t" style="left:677px;top:40px;font-size:13px;line-height:16px;color:#2a2a2a">录制</div>
 <svg class="a" style="left:706px;top:0" width="27" height="27" viewBox="0 0 27 27"><path d="M1 0h26v26z" fill="#f5821f"/><text x="15" y="11" transform="rotate(45 15 11)" font-size="7" font-family="Liberation Sans" font-weight="bold" fill="#fff" text-anchor="middle">NEW</text></svg>
 <!-- live -->
 <svg class="a" style="left:760px;top:8px" width="30" height="26" viewBox="0 0 30 26"><path d="M9 1l4 4M21 1l-4 4" stroke="#46474c" stroke-width="2.2"/><rect x="1.5" y="5" width="27" height="20" rx="3" fill="#46474c"/><path d="M12 9.5l8 5.5-8 5.5z" fill="#fff"/></svg>
 <div class="a t" style="left:762px;top:40px;font-size:13px;line-height:16px;color:#2a2a2a">直播</div>
 <!-- more -->
 <svg class="a" style="left:845px;top:17px" width="30" height="10" viewBox="0 0 30 10"><circle cx="4" cy="5" r="3.2" fill="#46474c"/><circle cx="15" cy="5" r="3.2" fill="#46474c"/><circle cx="26" cy="5" r="3.2" fill="#46474c"/></svg>
 <div class="a t" style="left:847px;top:40px;font-size:13px;line-height:16px;color:#2a2a2a">更多</div>
 <!-- leave -->
 <div class="a" style="left:1056px;top:10px;width:95px;height:45px;border:1.5px solid #f25555;border-radius:5px"></div>
 <div class="a t" style="left:1069px;top:23.5px;font-size:17.4px;line-height:20px;color:#f04848">离开会议</div>
</div>
</body></html>
